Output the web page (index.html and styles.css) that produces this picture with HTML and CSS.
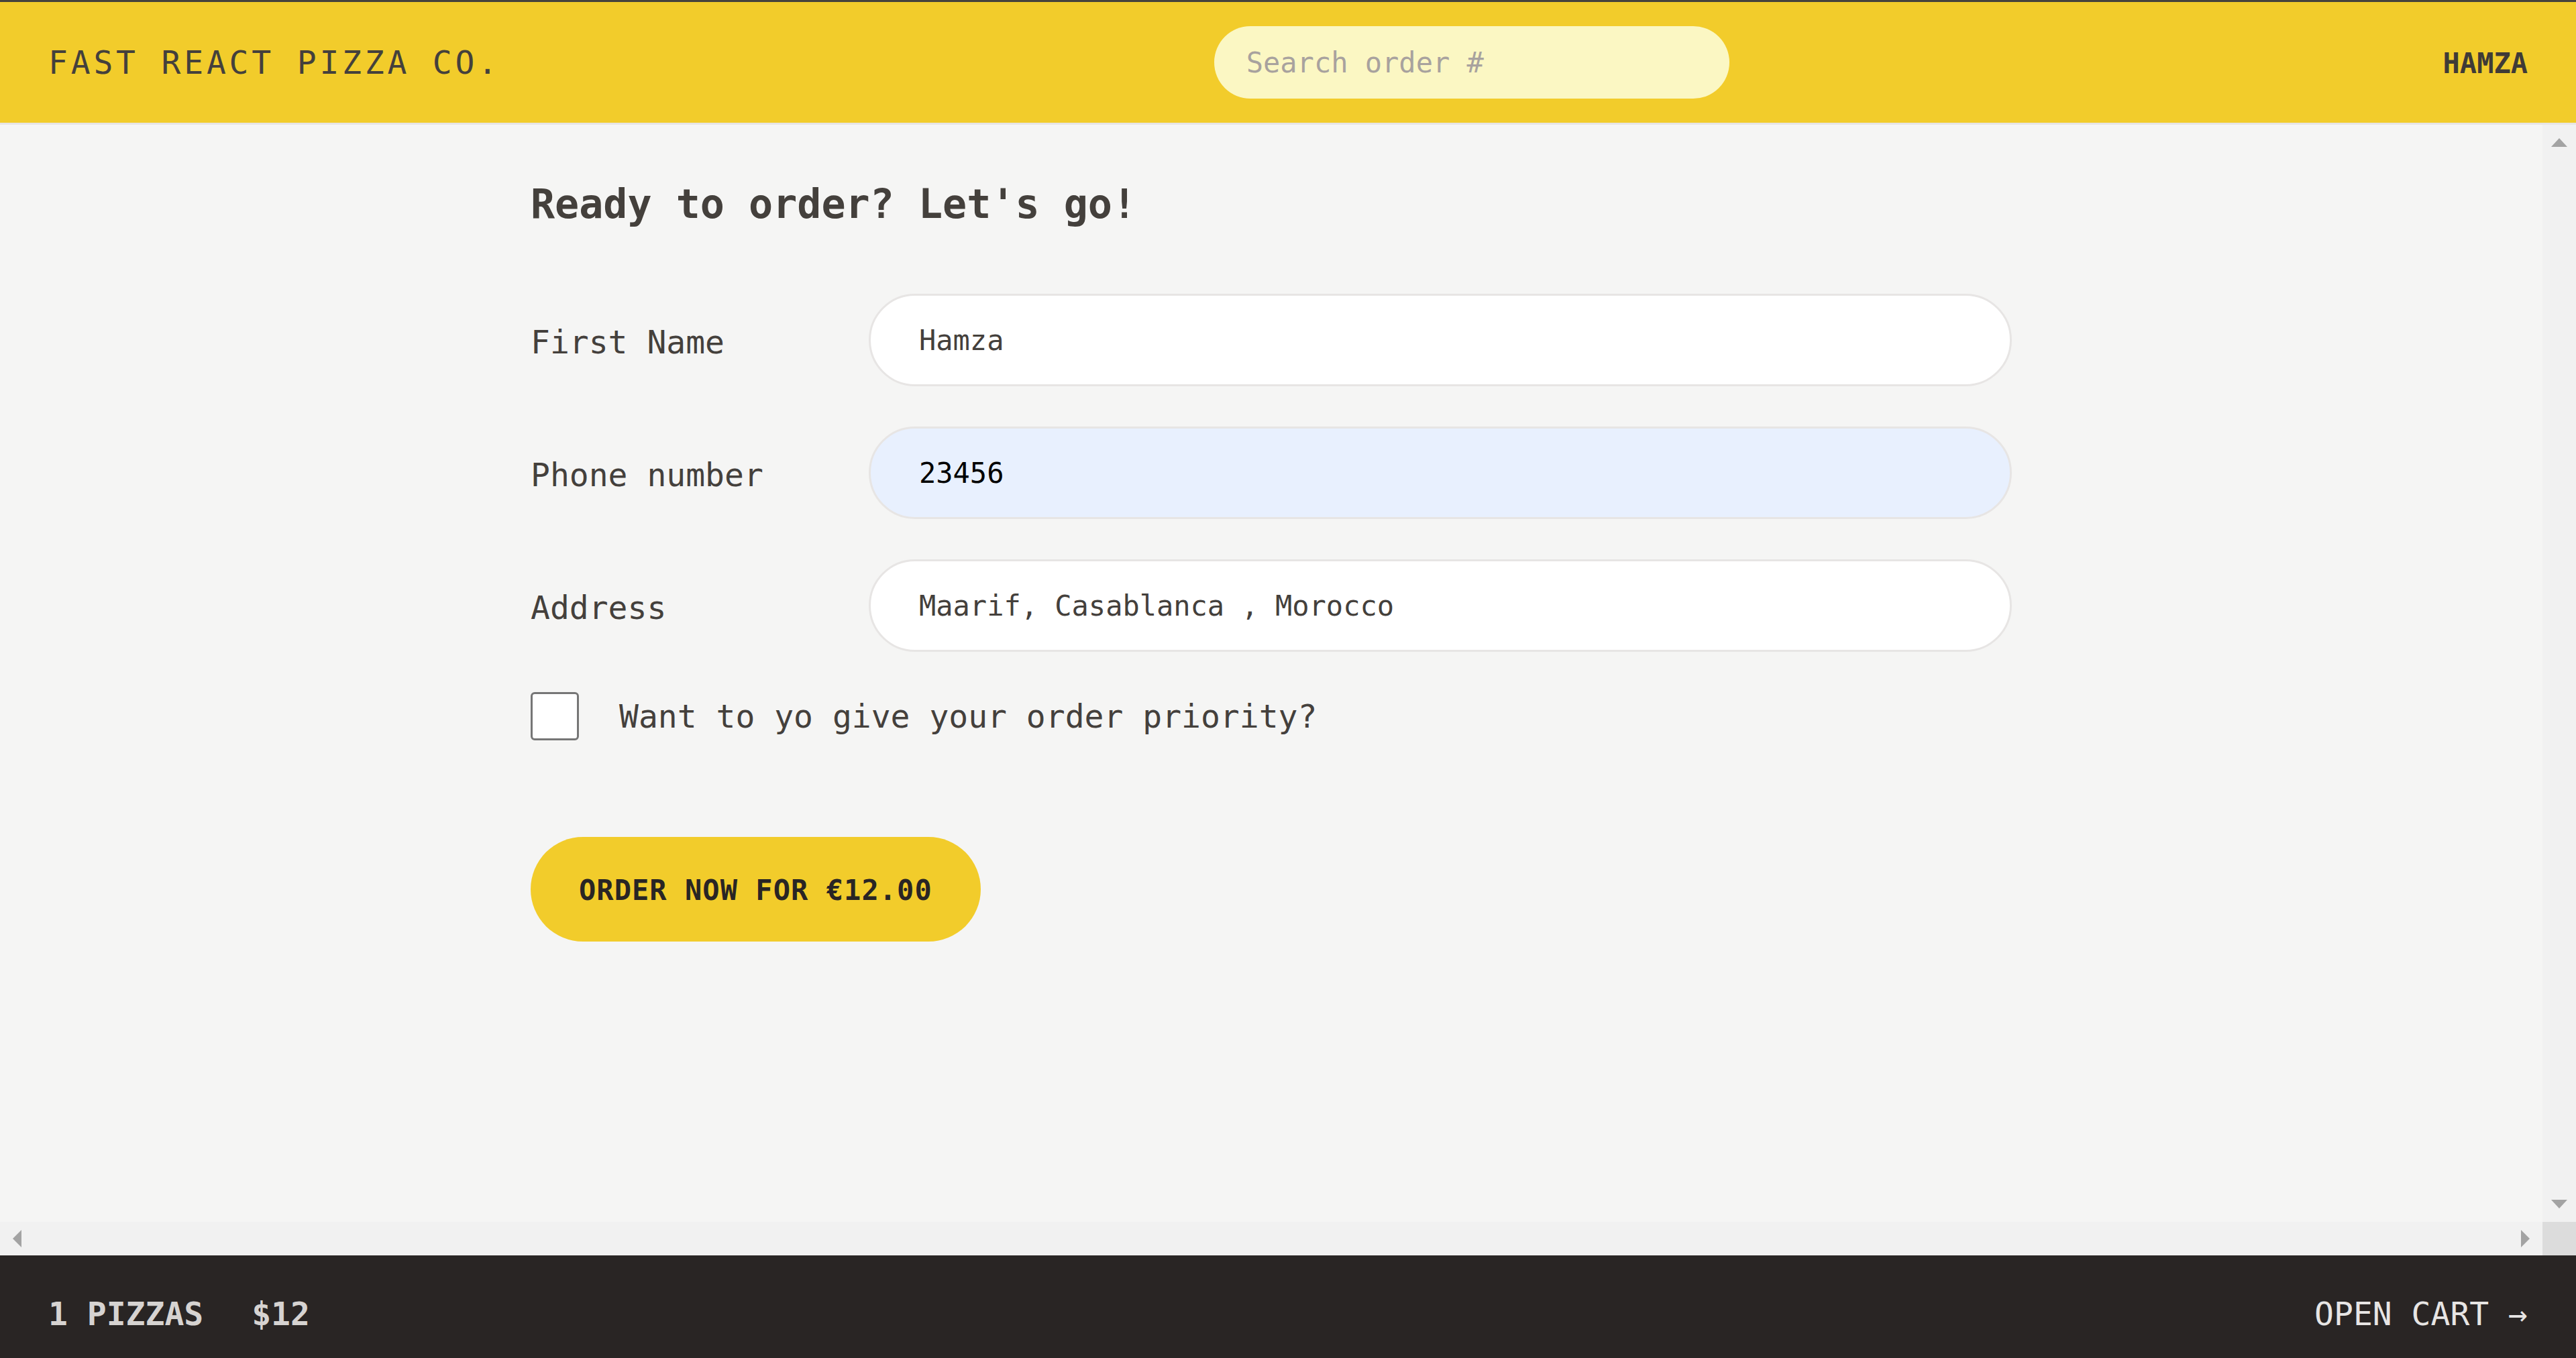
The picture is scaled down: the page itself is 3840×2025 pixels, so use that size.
FILE: index.html
```html
<!DOCTYPE html>
<html lang="en">
<head>
<meta charset="utf-8">
<title>Fast React Pizza Co.</title>
<link rel="stylesheet" href="styles.css">
</head>
<body>
<div class="app">
  <header class="header">
    <a class="logo" href="#">Fast React Pizza Co.</a>
    <form class="search-form">
      <input class="search" type="text" placeholder="Search order #">
    </form>
    <div class="username">Hamza</div>
  </header>

  <div class="scroll-area">
    <div class="viewport">
      <main class="main">
        <h2 class="title">Ready to order? Let's go!</h2>
        <form class="order-form">
          <div class="row">
            <label class="row-label">First Name</label>
            <input class="field" type="text" value="Hamza">
          </div>
          <div class="row">
            <label class="row-label">Phone number</label>
            <input class="field field-autofill" type="tel" value="23456">
          </div>
          <div class="row">
            <label class="row-label">Address</label>
            <input class="field" type="text" value="Maarif, Casablanca , Morocco">
          </div>
          <div class="check-row">
            <input class="check" type="checkbox" id="priority">
            <label class="check-label" for="priority">Want to yo give your order priority?</label>
          </div>
          <button class="order-btn" type="button">Order now for €12.00</button>
        </form>
      </main>
    </div>
    <div class="vbar">
      <span class="arrow arrow-up"></span>
      <span class="arrow arrow-down"></span>
    </div>
    <div class="hbar">
      <span class="arrow arrow-left"></span>
      <span class="arrow arrow-right"></span>
    </div>
    <div class="corner"></div>
  </div>

  <footer class="footer">
    <p class="summary"><span>1 pizzas</span><span>$12</span></p>
    <a class="open-cart" href="#">Open cart →</a>
  </footer>
</div>
</body>
</html>
```

FILE: styles.css
```css
html, body {
  margin: 0;
  padding: 0;
  overflow: hidden;
}

body {
  background: #f5f5f4;
  color: #44403c;
  font-family: "DejaVu Sans Mono", "Liberation Mono", monospace;
  font-size: 48px;
  line-height: 72px;
}

.app {
  height: 2040px;
  display: grid;
  grid-template-rows: auto 1fr auto;
  border-top: 3px solid #45433d;
  box-sizing: border-box;
}

/* Header */
.header {
  display: flex;
  align-items: center;
  justify-content: space-between;
  background: #f2cc2b;
  padding: 36px 72px;
  border-bottom: 3px solid #e7e5e4;
}

.logo {
  color: #44403c;
  text-decoration: none;
  text-transform: uppercase;
  letter-spacing: 0.1em;
  font-size: 48px;
  line-height: 72px;
}

.search-form {
  margin: 0;
  display: flex;
}

.search {
  width: 768px;
  height: 108px;
  box-sizing: border-box;
  border: none;
  border-radius: 9999px;
  background: #fbf7c3;
  padding: 0 48px;
  font-family: inherit;
  font-size: 42px;
  color: #44403c;
  outline: none;
}

.search::placeholder {
  color: #a8a29e;
}

.username {
  font-size: 42px;
  line-height: 60px;
  padding-top: 4px;
  font-weight: 600;
  text-transform: uppercase;
  color: #3f3b37;
}

/* Scroll area with classic scrollbars */
.scroll-area {
  display: grid;
  grid-template-columns: 1fr 50px;
  grid-template-rows: 1fr 50px;
  min-height: 0;
}

.viewport {
  background: #f5f5f4;
  overflow: hidden;
  min-height: 0;
}

.vbar {
  background: #f1f1f1;
  display: flex;
  flex-direction: column;
  justify-content: space-between;
  align-items: center;
  padding: 20px 0;
}

.hbar {
  background: #f1f1f1;
  display: flex;
  justify-content: space-between;
  align-items: center;
  padding: 0 19px;
}

.corner {
  background: #dcdcdc;
}

.arrow {
  display: block;
  width: 0;
  height: 0;
}

.arrow-up {
  border-left: 12.5px solid transparent;
  border-right: 12.5px solid transparent;
  border-bottom: 13px solid #a3a3a3;
}

.arrow-down {
  border-left: 12.5px solid transparent;
  border-right: 12.5px solid transparent;
  border-top: 13px solid #a3a3a3;
}

.arrow-left {
  border-top: 13px solid transparent;
  border-bottom: 13px solid transparent;
  border-right: 13px solid #a3a3a3;
}

.arrow-right {
  border-top: 13px solid transparent;
  border-bottom: 13px solid transparent;
  border-left: 13px solid #a3a3a3;
}

/* Main content */
.main {
  max-width: 2304px;
  margin: 0 auto;
  padding: 72px 48px;
  box-sizing: border-box;
}

.title {
  margin: 0 0 92px;
  padding-top: 4px;
  font-size: 60px;
  line-height: 84px;
  font-weight: 600;
  color: #44403c;
}

.order-form {
  margin: 0;
}

.row {
  display: flex;
  align-items: center;
  gap: 24px;
  margin-bottom: 60px;
}

.row-label {
  flex: 0 0 480px;
  font-size: 48px;
  line-height: 72px;
  padding-top: 6px;
}

.field {
  flex-grow: 1;
  min-width: 0;
  height: 138px;
  box-sizing: border-box;
  border: 3px solid #e7e5e4;
  border-radius: 9999px;
  background: #ffffff;
  padding: 0 72px;
  font-family: inherit;
  font-size: 42px;
  color: #44403c;
  outline: none;
}

.field-autofill {
  background: #e8f0fe;
  color: #000000;
}

.check-row {
  display: flex;
  align-items: center;
  gap: 60px;
  margin-bottom: 144px;
}

.check {
  appearance: none;
  -webkit-appearance: none;
  margin: 0;
  width: 72px;
  height: 72px;
  box-sizing: border-box;
  border: 3px solid #767676;
  border-radius: 6px;
  background: #ffffff;
  flex: none;
}

.check-label {
  font-size: 48px;
  line-height: 72px;
  font-weight: 500;
}

.order-btn {
  display: inline-block;
  border: none;
  border-radius: 9999px;
  background: #f2cc2b;
  padding: 50px 72px 46px;
  font-family: inherit;
  font-size: 42px;
  line-height: 60px;
  font-weight: 600;
  letter-spacing: 0.025em;
  text-transform: uppercase;
  color: #292524;
}

/* Footer */
.footer {
  display: flex;
  align-items: center;
  justify-content: space-between;
  background: #292524;
  padding: 51px 72px 45px;
  font-size: 48px;
  line-height: 72px;
  text-transform: uppercase;
  color: #e7e5e4;
}

.summary {
  margin: 0;
  display: flex;
  gap: 72px;
  font-weight: 600;
  color: #d6d3d1;
}

.open-cart {
  color: #e7e5e4;
  text-decoration: none;
}
```
